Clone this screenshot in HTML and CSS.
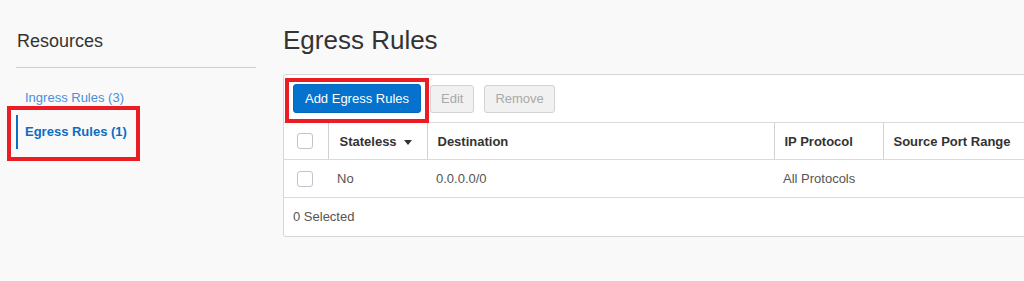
FILE: index.html
```html
<!DOCTYPE html>
<html lang="en">
<head>
    <meta charset="UTF-8">
    <title>Egress Rules</title>
    <link rel="stylesheet" href="styles.css">
</head>
<body>
    <div class="page">
        <!-- Left resources menu -->
        <aside class="sidebar">
            <h2 class="sidebar-title">Resources</h2>
            <ul class="resource-list">
                <li class="resource-item"><a href="#">Ingress Rules (3)</a></li>
                <li class="resource-item active">
                    <a href="#">Egress Rules (1)</a>
                    <span class="callout callout-menu"></span>
                </li>
            </ul>
        </aside>

        <main class="content">
            <h1 class="page-title">Egress Rules</h1>

            <div class="panel">
                <div class="toolbar">
                    <span class="btn-wrap">
                        <button class="btn btn-primary">Add Egress Rules</button>
                        <span class="callout callout-button"></span>
                    </span>
                    <button class="btn btn-disabled">Edit</button>
                    <button class="btn btn-disabled">Remove</button>
                </div>

                <table class="rules-table">
                    <colgroup>
                        <col class="col-check">
                        <col class="col-stateless">
                        <col class="col-dest">
                        <col class="col-proto">
                        <col class="col-port">
                    </colgroup>
                    <thead>
                        <tr>
                            <th><span class="checkbox"></span></th>
                            <th>Stateless <span class="caret"></span></th>
                            <th>Destination</th>
                            <th>IP Protocol</th>
                            <th>Source Port Range</th>
                        </tr>
                    </thead>
                    <tbody>
                        <tr>
                            <td><span class="checkbox"></span></td>
                            <td>No</td>
                            <td>0.0.0.0/0</td>
                            <td>All Protocols</td>
                            <td></td>
                        </tr>
                    </tbody>
                </table>

                <div class="table-footer">0 Selected</div>
            </div>
        </main>
    </div>
</body>
</html>
```

FILE: styles.css
```css
body {
    font-family: "Liberation Sans", Arial, sans-serif;
    margin: 0;
    padding: 0;
    background-color: #f9f9f9;
    color: #333;
    overflow: hidden;
}

.page {
    display: flex;
    align-items: flex-start;
}

/* Sidebar */

.sidebar {
    flex-shrink: 0;
    width: 240px;
    margin-left: 16px;
    padding-top: 31px;
}

.sidebar-title {
    margin: 0;
    padding-left: 1px;
    padding-bottom: 15px;
    font-size: 18px;
    font-weight: normal;
    line-height: 21px;
    color: #333;
    border-bottom: 1px solid #cfcfcf;
}

.resource-list {
    list-style: none;
    margin: 0;
    padding: 22px 0 0 0;
}

.resource-item {
    position: relative;
    font-size: 13px;
    line-height: 16px;
    padding: 0 0 0 9px;
    margin-bottom: 9px;
}

.resource-item a {
    color: #4a8fd9;
    text-decoration: none;
}

.resource-item.active {
    border-left: 2px solid #0a6dc4;
    padding: 9px 0 9px 7px;
}

.resource-item.active a {
    color: #0a6dc4;
    font-weight: bold;
}

/* red annotation boxes drawn over the screenshot */
.callout {
    position: absolute;
    border: 4px solid #ec1c24;
    pointer-events: none;
}

.callout-menu {
    left: -11px;
    top: -9px;
    width: 125px;
    height: 47px;
}

.callout-button {
    left: -8px;
    top: -6px;
    right: -8px;
    bottom: -10px;
}

/* Main area - the panel is cut off by the right edge */

.content {
    flex: 1;
    min-width: 0;
    overflow: hidden;
    margin-left: 27px;
    padding-top: 25px;
    padding-bottom: 4px;
}

.page-title {
    margin: 0 0 19px 0;
    font-size: 26px;
    font-weight: normal;
    line-height: 30px;
    color: #333;
}

.panel {
    width: calc(100% + 60px);
    background-color: #fff;
    border: 1px solid #d3d6da;
    border-radius: 3px;
}

.toolbar {
    display: flex;
    align-items: center;
    gap: 9px;
    padding: 9px;
}

.btn-wrap {
    position: relative;
    display: inline-flex;
}

.btn {
    font-family: "Liberation Sans", Arial, sans-serif;
    font-size: 13px;
    height: 29px;
    padding: 0 10px;
    border-radius: 3px;
    cursor: pointer;
}

.btn-primary {
    width: 128px;
    background-color: #0572ce;
    border: 1px solid #0468bd;
    color: #fff;
}

.btn-disabled {
    background-color: #f1f1f1;
    border: 1px solid #d2d2d2;
    color: #a9a9a9;
    cursor: default;
    height: 28px;
}

.btn-disabled + .btn-disabled {
    margin-left: 1px;
}

/* Table */

.rules-table {
    width: 100%;
    border-collapse: collapse;
    table-layout: fixed;
    font-size: 13px;
}

.col-check { width: 44px; }
.col-stateless { width: 99px; }
.col-dest { width: 347px; }
.col-proto { width: 109px; }

.rules-table th {
    height: 36px;
    padding: 0 10px;
    text-align: left;
    font-weight: bold;
    color: #333;
    white-space: nowrap;
    border-top: 1px solid #d9dcdf;
    border-bottom: 1px solid #d9dcdf;
    border-left: 1px solid #d0d3d6;
}

.rules-table th:first-child {
    border-left: none;
}

.rules-table th:nth-child(2) {
    padding-left: 11px;
}

.rules-table td {
    height: 37px;
    padding: 0 9px;
    color: #555;
    border-bottom: 1px solid #d9dcdf;
}

.rules-table th:first-child,
.rules-table td:first-child {
    padding: 0 0 0 13px;
}

.checkbox {
    display: inline-block;
    width: 14px;
    height: 14px;
    border: 1px solid #bfc4ca;
    border-radius: 3px;
    background-color: #fff;
    vertical-align: middle;
}

.caret {
    display: inline-block;
    width: 0;
    height: 0;
    margin-left: 4px;
    border-left: 4px solid transparent;
    border-right: 4px solid transparent;
    border-top: 5px solid #333;
    vertical-align: middle;
}

.table-footer {
    height: 38px;
    line-height: 38px;
    padding-left: 9px;
    font-size: 13px;
    color: #555;
}
```
